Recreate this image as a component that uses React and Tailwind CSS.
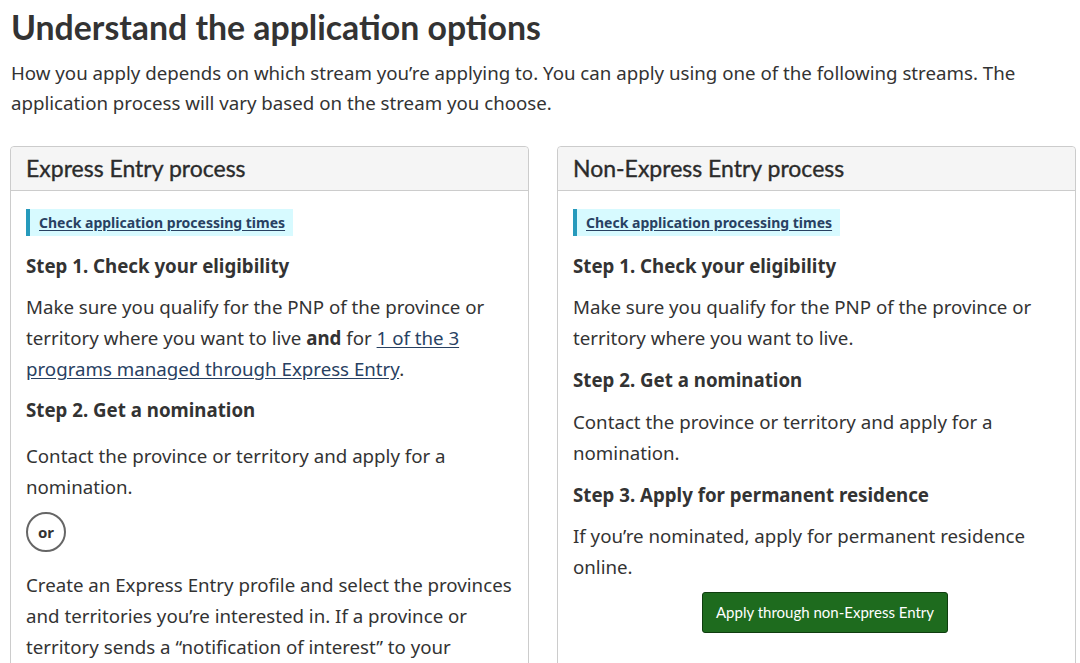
import React from 'react';

const Callout = () => (
  <div className="inline-block border-l-4 border-[#269abc] bg-[#d7faff] pl-[9px] pr-[8px] h-[27px] leading-[27px]">
    <a href="#" className="text-[14px] font-bold text-[#284162] underline underline-offset-2">
      Check application processing times
    </a>
  </div>
);

const StepTitle = ({ children, className = '' }) => (
  <h4 className={`text-[18.7px] leading-[31px] font-bold text-[#333] ${className}`}>{children}</h4>
);

const Para = ({ children, className = '' }) => (
  <p className={`text-[18.7px] leading-[31px] text-[#333] ${className}`}>{children}</p>
);

const Panel = ({ title, children }) => (
  <section className="border border-[#ccc] rounded-[4px] bg-white h-[560px]">
    <header className="bg-[#f5f5f5] border-b border-[#ccc] rounded-t-[4px] h-[44px] px-[15px] flex items-center">
      <h3 className="font-['Lato',sans-serif] text-[23px] text-[#2b2b2b] [-webkit-text-stroke:0.35px_#2b2b2b]">{title}</h3>
    </header>
    <div className="px-[15px] pt-[18px]">{children}</div>
  </section>
);

export default function App() {
  return (
    <div className="font-['Noto_Sans',sans-serif] text-[#333] bg-white min-h-screen pl-[10px] pr-[4px] overflow-hidden h-[663px]">
      <h2 className="font-['Lato',sans-serif] font-bold text-[33.8px] leading-[40px] pt-[7px] pl-[1px] text-[#333]">
        Understand the application options
      </h2>
      <p className="text-[18.7px] leading-[30px] mt-[11px] pl-[1px]">
        How you apply depends on which stream you’re applying to. You can apply using one of the following streams. The
        application process will vary based on the stream you choose.
      </p>

      <div className="grid grid-cols-2 gap-[28px] mt-[28px]">
        <Panel title="Express Entry process">
          <Callout />
          <StepTitle className="mt-[14px]">Step 1. Check your eligibility</StepTitle>
          <Para className="mt-[10px]">
            Make sure you qualify for the PNP of the province or territory where you want to live <strong>and</strong> for{' '}
            <a href="#" className="text-[#284162] underline underline-offset-2">1 of the 3 programs managed through Express Entry</a>.
          </Para>
          <StepTitle className="mt-[10px]">Step 2. Get a nomination</StepTitle>
          <Para className="mt-[15px]">Contact the province or territory and apply for a nomination.</Para>
          <div className="mt-[10px] w-[40px] h-[40px] rounded-full border-2 border-[#666] flex items-center justify-center text-[15px] font-bold">
            or
          </div>
          <Para className="mt-[17px]">
            Create an Express Entry profile and select the provinces and territories you’re interested in. If a province or
            territory sends a “notification of interest” to your
          </Para>
        </Panel>

        <Panel title="Non-Express Entry process">
          <Callout />
          <StepTitle className="mt-[14px]">Step 1. Check your eligibility</StepTitle>
          <Para className="mt-[10px]">
            Make sure you qualify for the PNP of the province or territory where you want to live.
          </Para>
          <StepTitle className="mt-[11px]">Step 2. Get a nomination</StepTitle>
          <Para className="mt-[11px]">Contact the province or territory and apply for a nomination.</Para>
          <StepTitle className="mt-[11px]">Step 3. Apply for permanent residence</StepTitle>
          <Para className="mt-[10px]">If you’re nominated, apply for permanent residence online.</Para>
          <a
            href="#"
            className="mt-[10px] ml-[129px] inline-flex items-center h-[41px] px-[13px] rounded-[3px] bg-[#1e6b1e] border border-[#0f3d0f] text-white font-['Lato',sans-serif] text-[15px]"
          >
            Apply through non-Express Entry
          </a>
        </Panel>
      </div>
    </div>
  );
}
